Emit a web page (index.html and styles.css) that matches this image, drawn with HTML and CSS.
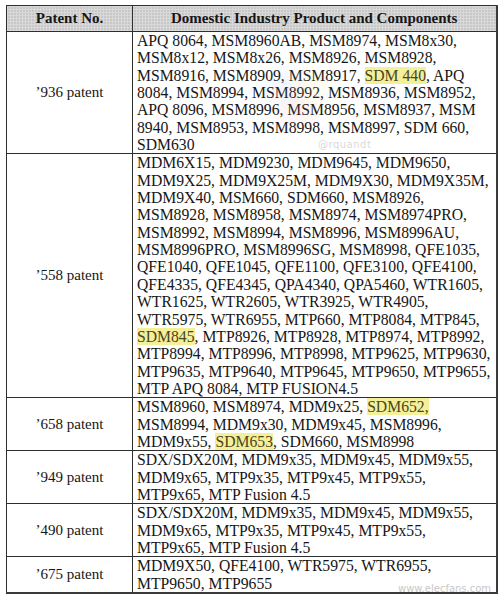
FILE: index.html
```html
<!DOCTYPE html>
<html>
<head>
<meta charset="utf-8">
<link rel="stylesheet" href="styles.css">
</head>
<body>
<div class="page">
<table class="patents">
  <colgroup><col class="c1"><col class="c2"></colgroup>
  <thead>
    <tr><th>Patent No.</th><th>Domestic Industry Product and Components</th></tr>
  </thead>
  <tbody>
    <tr>
      <td class="pat">’936 patent</td>
      <td class="prod">APQ 8064, MSM8960AB, MSM8974, MSM8x30,<br>MSM8x12, MSM8x26, MSM8926, MSM8928,<br>MSM8916, MSM8909, MSM8917, <span class="hl">SDM 440</span>, APQ<br>8084, MSM8994, MSM8992, MSM8936, MSM8952,<br>APQ 8096, MSM8996, MSM8956, MSM8937, MSM<br>8940, MSM8953, MSM8998, MSM8997, SDM 660,<br>SDM630</td>
    </tr>
    <tr>
      <td class="pat">’558 patent</td>
      <td class="prod">MDM6X15, MDM9230, MDM9645, MDM9650,<br>MDM9X25, MDM9X25M, MDM9X30, MDM9X35M,<br>MDM9X40, MSM660, SDM660, MSM8926,<br>MSM8928, MSM8958, MSM8974, MSM8974PRO,<br>MSM8992, MSM8994, MSM8996, MSM8996AU,<br>MSM8996PRO, MSM8996SG, MSM8998, QFE1035,<br>QFE1040, QFE1045, QFE1100, QFE3100, QFE4100,<br>QFE4335, QFE4345, QPA4340, QPA5460, WTR1605,<br>WTR1625, WTR2605, WTR3925, WTR4905,<br>WTR5975, WTR6955, MTP660, MTP8084, MTP845,<br><span class="hl">SDM845</span>, MTP8926, MTP8928, MTP8974, MTP8992,<br>MTP8994, MTP8996, MTP8998, MTP9625, MTP9630,<br>MTP9635, MTP9640, MTP9645, MTP9650, MTP9655,<br>MTP APQ 8084, MTP FUSION4.5</td>
    </tr>
    <tr>
      <td class="pat">’658 patent</td>
      <td class="prod">MSM8960, MSM8974, MDM9x25, <span class="hl">SDM652,</span><br>MSM8994, MDM9x30, MDM9x45, MSM8996,<br>MDM9x55, <span class="hl">SDM653</span>, SDM660, MSM8998</td>
    </tr>
    <tr>
      <td class="pat">’949 patent</td>
      <td class="prod">SDX/SDX20M, MDM9x35, MDM9x45, MDM9x55,<br>MDM9x65, MTP9x35, MTP9x45, MTP9x55,<br>MTP9x65, MTP Fusion 4.5</td>
    </tr>
    <tr>
      <td class="pat">’490 patent</td>
      <td class="prod">SDX/SDX20M, MDM9x35, MDM9x45, MDM9x55,<br>MDM9x65, MTP9x35, MTP9x45, MTP9x55,<br>MTP9x65, MTP Fusion 4.5</td>
    </tr>
    <tr>
      <td class="pat">’675 patent</td>
      <td class="prod">MDM9X50, QFE4100, WTR5975, WTR6955,<br>MTP9650, MTP9655</td>
    </tr>
  </tbody>
</table>
<div class="wm-blob"></div>
<div class="wm-quandt">@rquandt</div>
<div class="wm-elec-url">www.elecfans.com</div>
</div>
</body>
</html>
```
FILE: styles.css
```css
html, body {
  margin: 0;
  padding: 0;
  background: #ffffff;
}
.page {
  position: relative;
  width: 501px;
  height: 599px;
  overflow: hidden;
  padding: 5px 0 0 6px;
  box-sizing: border-box;
}
.patents {
  border-collapse: collapse;
  table-layout: fixed;
  width: 490px;
  font-family: "Liberation Serif", "Times New Roman", serif;
  color: #161616;
}
.c1 { width: 126px; }
.c2 { width: 364px; }
.patents th,
.patents td {
  border: 1px solid #2e2e2e;
  padding: 0;
}
.patents th {
  height: 25px;
  font-size: 15px;
  font-weight: bold;
  text-align: center;
  vertical-align: middle;
  background:
    radial-gradient(circle, rgba(90, 90, 90, 0.55) 0.55px, transparent 1px) 0 0 / 3px 3px,
    #d9d9d9;
}
.patents th:last-child,
.patents td:last-child {
  border-right: 2px solid #3a3a3a;
}
.patents tr:last-child td {
  border-bottom: 2px solid #3a3a3a;
}
.pat {
  font-size: 15px;
  text-align: center;
  vertical-align: middle;
  line-height: 17.35px;
}
.prod {
  font-size: 15.7px;
  line-height: 17.35px;
  padding: 0 0 0 4px !important;
  white-space: nowrap;
  vertical-align: top;
}
.hl {
  background: #f4f09a;
  color: #4a4520;
}
.wm-blob {
  position: absolute;
  left: 262px;
  top: 62px;
  width: 70px;
  height: 70px;
  border-radius: 50%;
  background:
    radial-gradient(circle at 30% 35%, rgba(120, 170, 255, 0.10) 0, transparent 45%),
    radial-gradient(circle at 70% 35%, rgba(255, 220, 90, 0.12) 0, transparent 45%),
    radial-gradient(circle at 50% 70%, rgba(255, 120, 120, 0.10) 0, transparent 45%);
  pointer-events: none;
}
.wm-quandt {
  position: absolute;
  left: 318px;
  top: 139px;
  font-family: "DejaVu Sans", sans-serif;
  font-size: 10px;
  line-height: 12px;
  color: #dadada;
  letter-spacing: 0.5px;
}
.wm-elec-url {
  position: absolute;
  left: 398px;
  top: 583px;
  font-family: "DejaVu Sans", sans-serif;
  font-size: 10px;
  color: #c8c8c8;
}
```
